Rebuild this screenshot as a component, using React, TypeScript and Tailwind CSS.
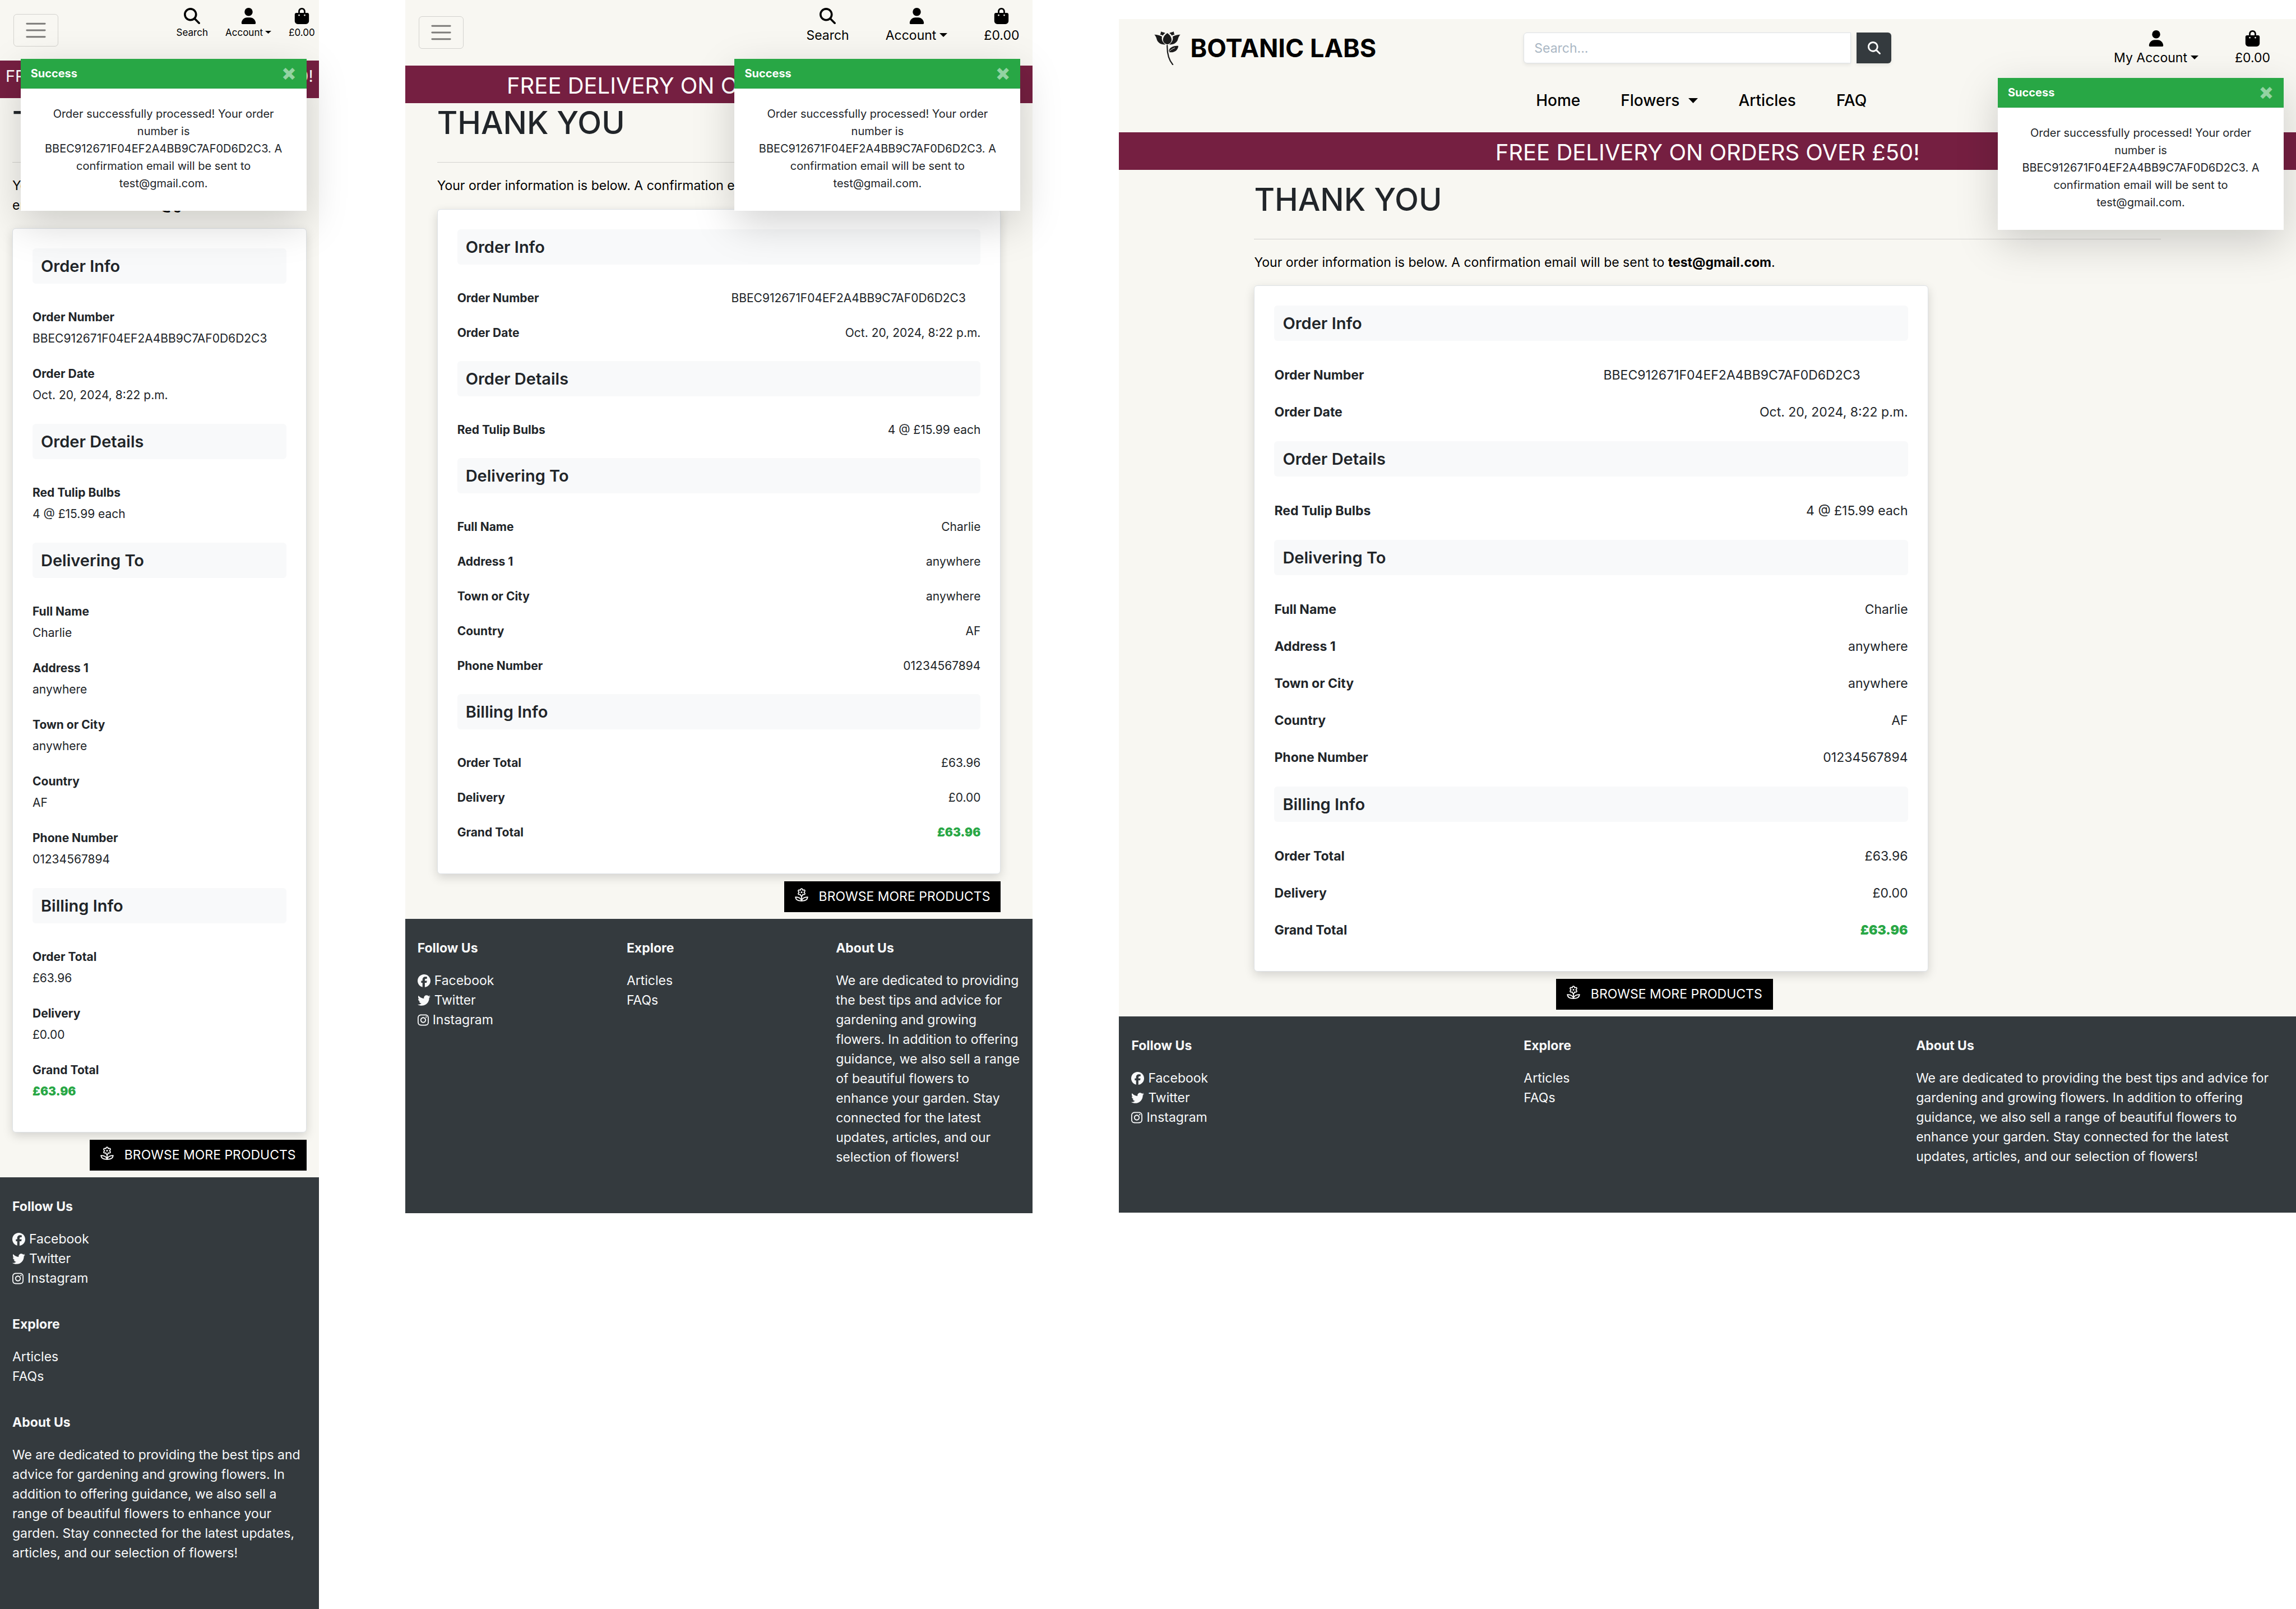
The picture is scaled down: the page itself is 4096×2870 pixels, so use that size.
import React from "react";
import {
  FaBagShopping,
  FaFacebook,
  FaInstagram,
  FaMagnifyingGlass,
  FaTwitter,
  FaUser,
} from "react-icons/fa6";

type Size = "phone" | "tablet" | "desktop";

type Row = { label: string; value: string; code?: boolean; total?: boolean };
type Section = { title: string; rows: Row[] };

const ORDER: Section[] = [
  {
    title: "Order Info",
    rows: [
      { label: "Order Number", value: "BBEC912671F04EF2A4BB9C7AF0D6D2C3", code: true },
      { label: "Order Date", value: "Oct. 20, 2024, 8:22 p.m." },
    ],
  },
  { title: "Order Details", rows: [{ label: "Red Tulip Bulbs", value: "4 @ £15.99 each" }] },
  {
    title: "Delivering To",
    rows: [
      { label: "Full Name", value: "Charlie" },
      { label: "Address 1", value: "anywhere" },
      { label: "Town or City", value: "anywhere" },
      { label: "Country", value: "AF" },
      { label: "Phone Number", value: "01234567894" },
    ],
  },
  {
    title: "Billing Info",
    rows: [
      { label: "Order Total", value: "£63.96" },
      { label: "Delivery", value: "£0.00" },
      { label: "Grand Total", value: "£63.96", total: true },
    ],
  },
];

function Caret({ small, large }: { small?: boolean; large?: boolean }) {
  const size = small ? "ml-1 h-[5px] w-[11px]" : large ? "ml-4 h-[9px] w-[17px]" : "ml-1.5 h-[7px] w-[14px]";
  return (
    <svg viewBox="0 0 14 7" preserveAspectRatio="none" className={`mb-1 inline-block align-middle ${size}`} aria-hidden="true">
      <path d="M0 0h14L7 7z" fill="currentColor" />
    </svg>
  );
}

function TulipLogo() {
  return (
    <svg viewBox="72 50 192 248" className="h-[60px] w-[47px]" aria-hidden="true">
      <g fill="#1b1b1b">
        <path d="M168 62C150 74 136 92 136 112C136 128 148 142 168 146C188 142 199 128 199 112C199 92 186 74 168 62Z" />
        <path d="M72 74C94 75 112 79 129 88C123 106 132 132 155 147C120 150 96 132 90 108C86 92 80 82 72 74Z" />
        <path d="M264 74C242 75 224 79 207 88C213 106 204 132 181 147C216 150 240 132 246 108C250 92 256 82 264 74Z" />
        <path d="M121 51C131 56 141 56 153 62C145 67 139 74 135 81C128 77 122 75 115 74C119 66 120 58 121 51Z" />
        <path d="M215 51C205 56 195 56 183 62C191 67 197 74 201 81C208 77 214 75 221 74C217 66 216 58 215 51Z" />
        <path d="M179 200C178 172 208 154 249 157C247 188 218 210 182 203Z" />
      </g>
      <path d="M167 154C166 210 180 262 208 295" fill="none" stroke="#1b1b1b" strokeWidth="9" strokeLinecap="round" />
      <path d="M177 204C188 188 205 178 222 172" fill="none" stroke="#f8f7f2" strokeWidth="4" strokeLinecap="round" />
    </svg>
  );
}

function FlowerIcon() {
  return (
    <svg viewBox="0 0 24 24" className="mb-2 size-[24px]" fill="none" stroke="currentColor" strokeWidth="1.8" strokeLinejoin="round" aria-hidden="true">
      <path d="M12 1.2C13.2 1.2 13.8 2.4 14.2 3.8C15.6 3.4 17.2 3.2 17.8 4.3C18.4 5.4 17.4 6.6 16.4 7.6C17.4 8.6 18.4 9.8 17.8 10.9C17.2 12 15.6 11.8 14.2 11.4C13.8 12.8 13.2 14 12 14C10.8 14 10.2 12.8 9.8 11.4C8.4 11.8 6.8 12 6.2 10.9C5.6 9.8 6.6 8.6 7.6 7.6C6.6 6.6 5.6 5.4 6.2 4.3C6.8 3.2 8.4 3.4 9.8 3.8C10.2 2.4 10.8 1.2 12 1.2Z" />
      <circle cx="12" cy="7.6" r="1.5" fill="currentColor" stroke="none" />
      <path d="M12 14V23" />
      <path d="M12 22.9C11.6 18.8 7.4 16 1.1 16.2C1.8 20.8 5.6 23.2 12 22.9Z" />
      <path d="M12 22.9C12.4 18.8 16.6 16 22.9 16.2C22.2 20.8 18.4 23.2 12 22.9Z" />
    </svg>
  );
}

function MenuToggle() {
  return (
    <button type="button" aria-label="Toggle navigation" className="flex h-[58px] w-20 items-center justify-center rounded-md border border-black/15">
      <svg viewBox="0 0 30 30" className="size-11" aria-hidden="true">
        <path d="M4 7h22M4 15h22M4 23h22" stroke="rgba(0,0,0,0.5)" strokeWidth="2" strokeLinecap="round" />
      </svg>
    </button>
  );
}

function UserActions({ size }: { size: Size }) {
  const phone = size === "phone";
  const label = phone ? "mt-0.5 text-[17px] leading-[27px]" : "mt-[3px] text-[23px] leading-[35px]";
  return (
    <div className={`flex items-start text-black ${phone ? "gap-[31px]" : "gap-[65px]"}`}>
      {size !== "desktop" && (
        <button type="button" className="flex flex-col items-center">
          <FaMagnifyingGlass className="size-[29px]" />
          <span className={label}>Search</span>
        </button>
      )}
      <button type="button" className="flex flex-col items-center">
        <FaUser className="size-[29px]" />
        <span className={`whitespace-nowrap ${label}`}>
          {size === "desktop" ? "My Account" : "Account"}
          <Caret small={phone} />
        </span>
      </button>
      <a href="#bag" className="flex flex-col items-center">
        <FaBagShopping className="size-[29px]" />
        <span className={label}>£0.00</span>
      </a>
    </div>
  );
}

function CompactHeader({ size }: { size: Size }) {
  return (
    <header
      className={
        size === "phone"
          ? "flex h-[108px] items-start justify-between pt-3.5 pr-[7px] pl-6"
          : "flex h-[117px] items-start justify-between pt-3.5 pr-6 pl-6"
      }
    >
      <div className={size === "phone" ? "pt-[11px]" : "pt-[15px]"}>
        <MenuToggle />
      </div>
      <UserActions size={size} />
    </header>
  );
}

function DesktopHeader() {
  return (
    <header className="flex h-[202px] flex-col">
      <div className="grid grid-cols-3 items-start">
        <a href="#home" className="flex items-center gap-[17px] pt-[22px] pl-[63px] text-[45px] leading-[60px] font-bold text-black">
          <TulipLogo />
          BOTANIC LABS
        </a>
        <form className="flex gap-2.5 px-[22px] pt-6" role="search">
          <input
            type="text"
            aria-label="Search"
            placeholder="Search..."
            className="h-[55px] min-w-0 flex-1 rounded-l-md border border-[#dee2e6] bg-white px-[18px] text-[23px] shadow-[0_3px_6px_rgba(0,0,0,0.075)] placeholder:text-[#aab7c4]"
          />
          <button
            type="button"
            aria-label="Submit search"
            className="flex h-[55px] w-[62px] items-center justify-center rounded-r-md bg-[#343a3e] text-white shadow-[0_3px_6px_rgba(0,0,0,0.075)]"
          >
            <FaMagnifyingGlass className="size-[23px]" />
          </button>
        </form>
        <div className="flex justify-end pt-5 pr-[46px]">
          <UserActions size="desktop" />
        </div>
      </div>
      <nav className="mt-[41px] flex justify-center gap-[72px] pr-[22px] text-[28px] leading-[35px] font-medium text-black">
        <a href="#home">Home</a>
        <button type="button">
          Flowers
          <Caret large />
        </button>
        <a href="#articles">Articles</a>
        <a href="#faq">FAQ</a>
      </nav>
    </header>
  );
}

function Toast() {
  return (
    <div role="alert" className="absolute top-[105px] right-[22px] w-[510px] bg-white shadow-[0_23px_70px_rgba(0,0,0,0.175)]">
      <div className="flex h-[53px] items-center justify-between border-b border-black/5 bg-[#28a745] px-[18px]">
        <strong className="text-[20px] leading-[31px] font-bold text-white">Success</strong>
        <button type="button" aria-label="Close" className="pb-1 text-[38px] leading-[35px] font-black text-white/50">
          ×
        </button>
      </div>
      <p className="px-[35px] pt-[30px] pb-[33px] text-center text-[20px] leading-[31px] text-[#212529]">
        Order successfully processed! Your order number is BBEC912671F04EF2A4BB9C7AF0D6D2C3. A confirmation email will
        be sent to test@gmail.com.
      </p>
    </div>
  );
}

function OrderCard({ size }: { size: Size }) {
  const list =
    size === "desktop"
      ? "pt-11 pb-[3px] text-[23px] leading-[35px]"
      : "pt-11 pb-1 text-[21px] leading-[31px]";
  const row = size === "phone" ? "mb-8 flex flex-col gap-[7px]" : "mb-[31px] grid grid-cols-2 gap-x-11";
  const bottom = size === "tablet" ? "pb-[23px]" : "pb-[21px]";
  return (
    <section
      className={`rounded-md border border-[#dee2e6] bg-white px-[35px] pt-[35px] text-[#212529] shadow-[0_6px_18px_rgba(0,0,0,0.15)] ${bottom}`}
    >
      {ORDER.map((section) => (
        <div key={section.title}>
          <h2 className="rounded-md bg-[#f8f9fa] px-[15px] py-3.5 text-[29px] leading-[35px] font-semibold">
            {section.title}
          </h2>
          <dl className={list}>
            {section.rows.map((item) => (
              <div key={item.label} className={row}>
                <dt className="font-bold">{item.label}</dt>
                <dd
                  className={`${size === "phone" || item.code ? "text-left" : "text-right"} ${
                    item.total ? "font-black text-[#28a745]" : ""
                  }`}
                >
                  {item.value}
                </dd>
              </div>
            ))}
          </dl>
        </div>
      ))}
    </section>
  );
}

function Footer({ size }: { size: Size }) {
  const title = "mb-[23px] font-bold";
  return (
    <footer
      className={`bg-[#343a3e] pt-[35px] pb-[35px] text-[23px] leading-[35px] text-[#f8f9fa] ${
        size === "phone" ? "flex flex-col" : "grid grid-cols-3"
      }`}
    >
      <div className="px-[22px] pb-[47px]">
        <h3 className={title}>Follow Us</h3>
        <ul>
          <li>
            <a href="#facebook" className="flex items-center gap-[7px]">
              <FaFacebook className="size-[23px]" />
              Facebook
            </a>
          </li>
          <li>
            <a href="#twitter" className="flex items-center gap-[7px]">
              <FaTwitter className="size-[23px]" />
              Twitter
            </a>
          </li>
          <li>
            <a href="#instagram" className="flex items-center gap-[7px]">
              <FaInstagram className="h-[23px] w-5" />
              Instagram
            </a>
          </li>
        </ul>
      </div>
      <div className="px-[22px] pb-[47px]">
        <h3 className={title}>Explore</h3>
        <ul>
          <li>
            <a href="#articles">Articles</a>
          </li>
          <li>
            <a href="#faqs">FAQs</a>
          </li>
        </ul>
      </div>
      <div className="px-[22px] pb-[47px]">
        <h3 className={title}>About Us</h3>
        <p>
          We are dedicated to providing the best tips and advice for gardening and growing flowers. In addition to
          offering guidance, we also sell a range of beautiful flowers to enhance your garden. Stay connected for the
          latest updates, articles, and our selection of flowers!
        </p>
      </div>
    </footer>
  );
}

function CheckoutPage({ size }: { size: Size }) {
  const desktop = size === "desktop";
  const main =
    size === "phone" ? "px-[22px] pt-[9px] pb-3" : size === "tablet" ? "px-[57px] pb-3" : "px-[241px] pt-[18px] pb-3";
  return (
    <div className={`relative bg-[#f8f7f2] ${desktop ? "mt-[34px]" : ""}`}>
      {desktop ? <DesktopHeader /> : <CompactHeader size={size} />}
      <div
        className={`h-[67px] bg-[#751f41] text-center whitespace-nowrap text-white ${
          size === "phone" ? "pt-2.5 text-[29px] leading-[35px]" : "pt-[11px] text-[40px] leading-[50px]"
        }`}
      >
        FREE DELIVERY ON ORDERS OVER £50!
      </div>
      <main className={main}>
        <h1 className="text-[56px] leading-[70px] font-medium text-[#212529]">THANK YOU</h1>
        <hr className="mt-[35px] mb-6 border-t border-black/15" />
        <p className={`text-[23px] leading-[35px] text-black ${size === "tablet" ? "mb-6" : "mb-[23px]"}`}>
          Your order information is below. A confirmation email will be sent to{" "}
          <strong className="font-bold">test@gmail.com</strong>.
        </p>
        <div className="grid grid-cols-12 gap-x-11 gap-y-[13px]">
          <div className={desktop ? "col-span-9" : "col-span-12"}>
            <OrderCard size={size} />
          </div>
          <div className={`flex justify-end ${desktop ? "col-span-7" : "col-span-12"}`}>
            <a
              href="#products"
              className="flex h-[55px] items-center gap-[19px] bg-black px-[19px] text-[23px] leading-[35px] whitespace-nowrap text-white"
            >
              <FlowerIcon />
              BROWSE MORE PRODUCTS
            </a>
          </div>
        </div>
      </main>
      <Footer size={size} />
      <Toast />
    </div>
  );
}

export default function App() {
  return (
    <div className="grid min-h-screen grid-cols-[minmax(0,780fr)_minmax(0,1536fr)_minmax(0,2880fr)] items-start gap-x-[154px] overflow-x-hidden bg-white font-['Inter',sans-serif]">
      <CheckoutPage size="phone" />
      <CheckoutPage size="tablet" />
      <CheckoutPage size="desktop" />
    </div>
  );
}
